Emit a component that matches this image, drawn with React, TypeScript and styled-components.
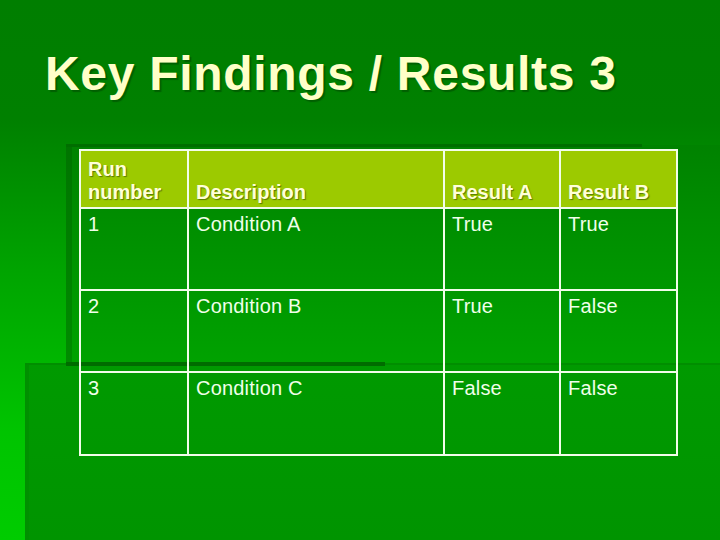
import React from 'react';
import styled, { createGlobalStyle } from 'styled-components';

const GlobalStyle = createGlobalStyle`
  html, body {
    margin: 0;
    padding: 0;
    background: #007f00;
  }
  body {
    font-family: 'Liberation Sans', Arial, sans-serif;
  }
`;

// slide background: base gradient plus the template's stacked rectangles, as layered backgrounds
const Slide = styled.div`
  width: 720px;
  height: 540px;
  overflow: hidden;
  box-sizing: border-box;
  padding: 46px 0 0 45px;
  display: flex;
  flex-direction: column;
  background:
    linear-gradient(#006c00, #006c00) 66px 362px / 319px 4px no-repeat,
    linear-gradient(#008e00, #008e00) 25px 363px / 695px 2px no-repeat,
    linear-gradient(#009000, #009000) 25px 363px / 4px 177px no-repeat,
    linear-gradient(#009a00, #009400) 25px 363px / 695px 177px no-repeat,
    linear-gradient(#006e00, #006e00) 66px 144px / 576px 3px no-repeat,
    linear-gradient(#007400, #008c00) 66px 145px / 6px 218px no-repeat,
    linear-gradient(to bottom, #008200, #008e00 35%, #00a200) 66px 145px / 654px 218px no-repeat,
    linear-gradient(to bottom, #007e00 0%, #008000 22%, #00a400 50%, #00c400 80%, #00cc00 100%);
`;

const Title = styled.h1`
  margin: 0;
  font-family: 'Liberation Sans', Arial, sans-serif;
  font-weight: 700;
  font-size: 48px;
  line-height: 56px;
  letter-spacing: 0.7px;
  color: #ffffc8;
  text-shadow: 2px 2px 1px rgba(0, 70, 0, 0.55);
  white-space: nowrap;
`;

const Table = styled.table`
  margin: 47px 0 0 34px;
  border-collapse: collapse;
  table-layout: fixed;
  width: 597px;
  border: 2px solid #f2fdea;
`;

const HeadRow = styled.tr`
  height: 58px;
  background: #9cca00;
`;

const BodyRow = styled.tr<{ $h: number }>`
  height: ${(p) => p.$h}px;
`;

const HeadCell = styled.th`
  border: 2px solid #f2fdea;
  padding: 0 7px 3px;
  vertical-align: bottom;
  text-align: left;
  font-weight: 700;
  font-size: 20px;
  line-height: 23px;
  color: #ffffd8;
  text-shadow: 1px 1px 1px rgba(70, 100, 0, 0.8);
`;

const Cell = styled.td`
  border: 2px solid #f2fdea;
  padding: 4px 7px 0;
  vertical-align: top;
  font-size: 20px;
  line-height: 23px;
  letter-spacing: 0.2px;
  color: #f0ffea;
`;

const widths = [108, 256, 116, 117];

const rows = [
  { h: 82, cells: ['1', 'Condition A', 'True', 'True'] },
  { h: 82, cells: ['2', 'Condition B', 'True', 'False'] },
  { h: 83, cells: ['3', 'Condition C', 'False', 'False'] },
];

export default function App() {
  return (
    <>
      <GlobalStyle />
      <Slide>
        <Title>Key Findings / Results 3</Title>
        <Table>
          <colgroup>
            {widths.map((w, i) => (
              <col key={i} style={{ width: w }} />
            ))}
          </colgroup>
          <thead>
            <HeadRow>
              <HeadCell>Run number</HeadCell>
              <HeadCell>Description</HeadCell>
              <HeadCell>Result A</HeadCell>
              <HeadCell>Result B</HeadCell>
            </HeadRow>
          </thead>
          <tbody>
            {rows.map((r, i) => (
              <BodyRow key={i} $h={r.h}>
                {r.cells.map((c, j) => (
                  <Cell key={j}>{c}</Cell>
                ))}
              </BodyRow>
            ))}
          </tbody>
        </Table>
      </Slide>
    </>
  );
}
